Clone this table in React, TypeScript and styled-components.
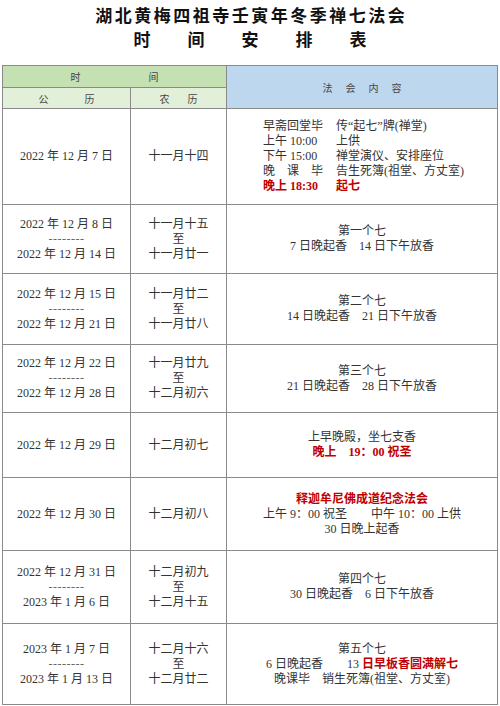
import React from "react";
import styled, { createGlobalStyle } from "styled-components";

const GlobalStyle = createGlobalStyle`
  html, body {
    margin: 0;
    padding: 0;
    background: #ffffff;
  }
  body {
    font-family: "Liberation Serif", "Noto Sans CJK SC", serif;
    color: #333333;
  }
`;

type Line = { parts: { text: string; red?: boolean }[] };

type Row = {
  height: number;
  solar: string[];
  lunar: string[];
  content: Line[];
};

const rows: Row[] = [
  {
    height: 69,
    solar: ["2022 年 12 月 8 日", "--------", "2022 年 12 月 14 日"],
    lunar: ["十一月十五", "至", "十一月廿一"],
    content: [
      { parts: [{ text: "第一个七" }] },
      { parts: [{ text: "7 日晚起香　14 日下午放香" }] },
    ],
  },
  {
    height: 71,
    solar: ["2022 年 12 月 15 日", "--------", "2022 年 12 月 21 日"],
    lunar: ["十一月廿二", "至", "十一月廿八"],
    content: [
      { parts: [{ text: "第二个七" }] },
      { parts: [{ text: "14 日晚起香　21 日下午放香" }] },
    ],
  },
  {
    height: 68,
    solar: ["2022 年 12 月 22 日", "--------", "2022 年 12 月 28 日"],
    lunar: ["十一月廿九", "至", "十二月初六"],
    content: [
      { parts: [{ text: "第三个七" }] },
      { parts: [{ text: "21 日晚起香　28 日下午放香" }] },
    ],
  },
  {
    height: 65,
    solar: ["2022 年 12 月 29 日"],
    lunar: ["十二月初七"],
    content: [
      { parts: [{ text: "上早晚殿，坐七支香" }] },
      { parts: [{ text: "晚上　19：00 祝圣", red: true }] },
    ],
  },
  {
    height: 73,
    solar: ["2022 年 12 月 30 日"],
    lunar: ["十二月初八"],
    content: [
      { parts: [{ text: "释迦牟尼佛成道纪念法会", red: true }] },
      { parts: [{ text: "上午 9：00 祝圣　　中午 10：00 上供" }] },
      { parts: [{ text: "30 日晚上起香" }] },
    ],
  },
  {
    height: 73,
    solar: ["2022 年 12 月 31 日", "--------", "2023 年 1 月 6 日"],
    lunar: ["十二月初九", "至", "十二月十五"],
    content: [
      { parts: [{ text: "第四个七" }] },
      { parts: [{ text: "30 日晚起香　6 日下午放香" }] },
    ],
  },
  {
    height: 81,
    solar: ["2023 年 1 月 7 日", "--------", "2023 年 1 月 13 日"],
    lunar: ["十二月十六", "至", "十二月廿二"],
    content: [
      { parts: [{ text: "第五个七" }] },
      {
        parts: [
          { text: "6 日晚起香　　13 " },
          { text: "日早板香圆满解七", red: true },
        ],
      },
      { parts: [{ text: "晚课毕　销生死簿(祖堂、方丈室)" }] },
    ],
  },
];

const firstDay = [
  { label: "早斋回堂毕", value: "传\u201c起七\u201d牌(禅堂)" },
  { label: "上午 10:00", value: "上供" },
  { label: "下午 15:00", value: "禅堂演仪、安排座位" },
  { label: "晚　课　毕", value: "告生死簿(祖堂、方丈室)" },
  { label: "晚上 18:30", value: "起七", red: true },
];

export default function App() {
  return (
    <Page>
      <GlobalStyle />
      <Title>
        <TitleLine>湖北黄梅四祖寺壬寅年冬季禅七法会</TitleLine>
        <Spread $gap={37}>
          {"时间安排表".split("").map((c) => (
            <span key={c}>{c}</span>
          ))}
        </Spread>
      </Title>

      <Table>
        <colgroup>
          <col style={{ width: 128 }} />
          <col style={{ width: 96 }} />
          <col />
        </colgroup>
        <thead>
          <tr style={{ height: 22 }}>
            <HeadCell colSpan={2} $bg="#c5e0b3">
              <Small $gap={68}>
                <span>时</span>
                <span>间</span>
              </Small>
            </HeadCell>
            <HeadCell rowSpan={2} $bg="#bdd7ee">
              <Small $gap={13}>
                {"法会内容".split("").map((c) => (
                  <span key={c}>{c}</span>
                ))}
              </Small>
            </HeadCell>
          </tr>
          <tr style={{ height: 21 }}>
            <HeadCell $bg="#e2efd9">
              <Small $gap={36}>
                <span>公</span>
                <span>历</span>
              </Small>
            </HeadCell>
            <HeadCell $bg="#e2efd9">
              <Small $gap={18}>
                <span>农</span>
                <span>历</span>
              </Small>
            </HeadCell>
          </tr>
        </thead>
        <tbody>
          <tr style={{ height: 96 }}>
            <Cell>2022 年 12 月 7 日</Cell>
            <Cell>十一月十四</Cell>
            <LeftCell>
              <Schedule>
                {firstDay.map((d) => (
                  <React.Fragment key={d.label}>
                    <Text $red={d.red}>{d.label}</Text>
                    <Text $red={d.red}>{d.value}</Text>
                  </React.Fragment>
                ))}
              </Schedule>
            </LeftCell>
          </tr>
          {rows.map((r, i) => (
            <tr key={i} style={{ height: r.height }}>
              <Cell>
                {r.solar.map((s, j) => (
                  <CellLine key={j} $dash={s.startsWith("-")}>
                    {s}
                  </CellLine>
                ))}
              </Cell>
              <Cell>
                {r.lunar.map((s, j) => (
                  <CellLine key={j}>{s}</CellLine>
                ))}
              </Cell>
              <Cell>
                {r.content.map((l, j) => (
                  <CellLine key={j}>
                    {l.parts.map((p, k) => (
                      <Text key={k} $red={p.red}>
                        {p.text}
                      </Text>
                    ))}
                  </CellLine>
                ))}
              </Cell>
            </tr>
          ))}
        </tbody>
      </Table>
    </Page>
  );
}

const Page = styled.div`
  width: 500px;
  padding: 0 2px 0 2px;
  box-sizing: border-box;
`;

const Title = styled.div`
  display: flex;
  flex-direction: column;
  align-items: center;
  padding-top: 3px;
  height: 65px;
  box-sizing: border-box;
  font-family: "Noto Sans CJK SC", sans-serif;
  font-weight: 700;
  font-size: 17px;
  line-height: 24px;
  color: #111111;
`;

const TitleLine = styled.div`
  letter-spacing: 2.5px;
  padding-left: 2.5px;
`;

const Spread = styled.div<{ $gap: number }>`
  display: flex;
  gap: ${(p) => p.$gap}px;
`;

const Table = styled.table`
  width: 496px;
  border-collapse: collapse;
  table-layout: fixed;
  font-size: 12px;
  line-height: 15px;
`;

const HeadCell = styled.th<{ $bg: string }>`
  background: ${(p) => p.$bg};
  border: 1px solid #8a8a8a;
  padding: 0;
  font-weight: 400;
  vertical-align: middle;
`;

const Small = styled.div<{ $gap: number }>`
  display: flex;
  justify-content: center;
  gap: ${(p) => p.$gap}px;
  font-family: "Noto Sans CJK SC", sans-serif;
  font-size: 10px;
  color: #444444;
`;

const Cell = styled.td`
  border: 1px solid #8a8a8a;
  padding: 0;
  text-align: center;
  vertical-align: middle;
`;

const LeftCell = styled(Cell)`
  text-align: left;
`;

const Schedule = styled.div`
  display: grid;
  grid-template-columns: 73px auto;
  padding-left: 36px;
`;

const CellLine = styled.div<{ $dash?: boolean }>`
  letter-spacing: ${(p) => (p.$dash ? "0.5px" : "0")};
  color: ${(p) => (p.$dash ? "#666666" : "inherit")};
`;

const Text = styled.span<{ $red?: boolean }>`
  color: ${(p) => (p.$red ? "#c00000" : "#333333")};
  font-weight: ${(p) => (p.$red ? 700 : 400)};
  white-space: pre;
`;
